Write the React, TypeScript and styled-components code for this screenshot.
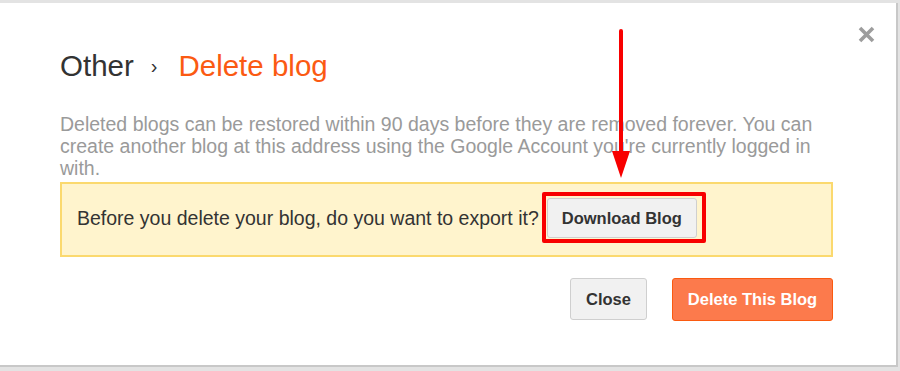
import React from "react";
import styled, { createGlobalStyle } from "styled-components";

const GlobalStyle = createGlobalStyle`
  html, body {
    margin: 0;
    padding: 0;
    background: #e3e3e3;
    font-family: "Liberation Sans", Arial, sans-serif;
  }
  * {
    box-sizing: border-box;
  }
`;

const Dialog = styled.div`
  position: relative;
  width: 898px;
  height: 364px;
  margin-top: 3px;
  padding: 46px 63px 0 60px;
  background: #fff;
  border-right: 2px solid #c8c8c8;
  border-bottom: 2px solid #c8c8c8;
`;

const CloseX = styled.button`
  position: absolute;
  top: 23px;
  right: 21px;
  width: 17px;
  height: 17px;
  padding: 0;
  border: none;
  background: none;
  cursor: pointer;
  display: flex;
`;

const Title = styled.h1`
  margin: 0;
  display: flex;
  align-items: center;
  font-size: 29.5px;
  line-height: 34px;
  font-weight: normal;
  color: #333;
`;

const Separator = styled.span`
  font-size: 20px;
  color: #333;
  margin: 0 21px 0 17px;
`;

const Current = styled.span`
  color: #fb5a12;
`;

const Description = styled.p`
  margin: 30px 0 0;
  font-size: 19.5px;
  line-height: 22px;
  color: #9a9a9a;
`;

const ExportBox = styled.div`
  margin-top: 3px;
  display: flex;
  align-items: center;
  padding: 8px 15px 12px;
  background: #fff4cd;
  border: 2px solid #fbd96e;
`;

const ExportText = styled.span`
  font-size: 19.5px;
  line-height: 22px;
  color: #333;
`;

const Highlight = styled.span`
  display: inline-flex;
  margin-left: 3px;
  padding: 2px 5px 1px 1px;
  border: 4px solid #f80000;
  border-radius: 2px;
`;

const Button = styled.button<{ $primary?: boolean; $width: number }>`
  width: ${(p) => p.$width}px;
  height: ${(p) => (p.$primary ? 43 : 40)}px;
  padding: 0;
  font-family: inherit;
  font-size: 16.5px;
  font-weight: bold;
  color: ${(p) => (p.$primary ? "#fff" : "#333")};
  background: ${(p) => (p.$primary ? "#fc7a4c" : "#f1f1f1")};
  border: 1px solid ${(p) => (p.$primary ? "#fa5a10" : "#cfcfcf")};
  border-radius: 3px;
  cursor: pointer;
`;

const Footer = styled.div`
  margin-top: 21px;
  display: flex;
  justify-content: flex-end;
  align-items: flex-start;
  gap: 25px;
`;

const Arrow = styled.svg`
  position: absolute;
  left: 610px;
  top: 24px;
  pointer-events: none;
`;

export default function App() {
  return (
    <>
      <GlobalStyle />
      <Dialog>
        <CloseX aria-label="Close">
          <svg width="17" height="17" viewBox="0 0 17 17">
            <path d="M2 2 L15 15 M15 2 L2 15" stroke="#9d9d9d" strokeWidth="3.6" />
          </svg>
        </CloseX>
        <Title>
          Other<Separator>›</Separator>
          <Current>Delete blog</Current>
        </Title>
        <Description>
          Deleted blogs can be restored within 90 days before they are removed forever. You can
          create another blog at this address using the Google Account you're currently logged in
          with.
        </Description>
        <ExportBox>
          <ExportText>Before you delete your blog, do you want to export it?</ExportText>
          <Highlight>
            <Button $width={150}>Download Blog</Button>
          </Highlight>
        </ExportBox>
        <Footer>
          <Button $width={77} style={{ height: 42 }}>
            Close
          </Button>
          <Button $primary $width={161}>
            Delete This Blog
          </Button>
        </Footer>
        <Arrow width="24" height="156" viewBox="0 0 24 156">
          <line x1="11" y1="4" x2="11" y2="128" stroke="#f80000" strokeWidth="4" strokeLinecap="round" />
          <polygon points="2,124 20,124 11,151" fill="#f80000" />
        </Arrow>
      </Dialog>
    </>
  );
}
